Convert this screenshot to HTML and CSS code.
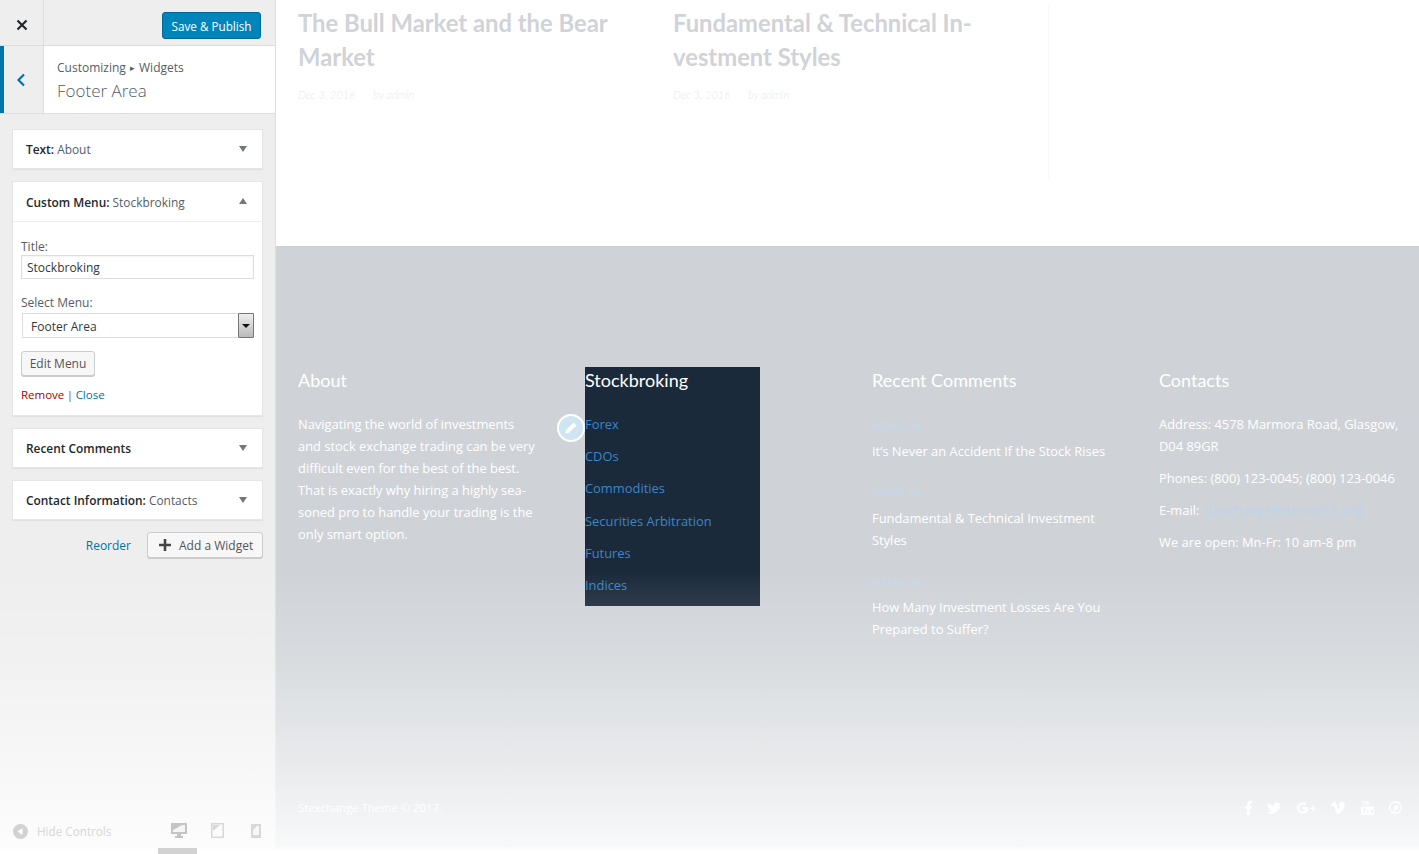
FILE: index.html
```html
<!DOCTYPE html>
<html lang="en">
<head>
<meta charset="utf-8">
<title>Customizer</title>
<link rel="stylesheet" href="styles.css">
</head>
<body>
<div class="app">
  <aside class="sidebar">
    <header class="topbar">
      <button class="close-btn" aria-label="Close">
        <svg width="12" height="12" viewBox="0 0 12 12"><path d="M1.500 1.500l9 9M10.500 1.500l-9 9" stroke="#23282d" stroke-width="2.200" fill="none"/></svg>
      </button>
      <button class="publish">Save &amp; Publish</button>
    </header>
    <div class="section-head">
      <div class="back">
        <svg width="10" height="14" viewBox="0 0 10 14"><path d="M8 1.500L2.500 7 8 12.500" stroke="#0073aa" stroke-width="2.200" fill="none"/></svg>
      </div>
      <div class="section-title">
        <div class="crumb">Customizing <span class="crumb-arrow">▸</span> Widgets</div>
        <div class="section-name">Footer Area</div>
      </div>
    </div>
    <div class="widgets">
      <div class="widget">
        <div class="widget-top"><span><b>Text:</b> About</span><i class="tri"></i></div>
      </div>
      <div class="widget">
        <div class="widget-top open"><span><b>Custom Menu:</b> Stockbroking</span><i class="tri up"></i></div>
        <div class="widget-body">
          <label class="lbl">Title:</label>
          <div class="input">Stockbroking</div>
          <label class="lbl lbl-select">Select Menu:</label>
          <div class="select">
            <span class="select-value">Footer Area</span>
            <span class="select-arrow"><i></i></span>
          </div>
          <button class="edit-menu">Edit Menu</button>
          <div class="actions"><a class="remove">Remove</a> | <a class="link">Close</a></div>
        </div>
      </div>
      <div class="widget">
        <div class="widget-top"><span><b>Recent Comments</b></span><i class="tri"></i></div>
      </div>
      <div class="widget">
        <div class="widget-top"><span><b>Contact Information:</b> Contacts</span><i class="tri"></i></div>
      </div>
      <div class="widget-actions">
        <a class="link">Reorder</a>
        <button class="add-widget">
          <svg width="12" height="12" viewBox="0 0 12 12"><path d="M6 0v12M0 6h12" stroke="#444" stroke-width="2.600"/></svg>
          Add a Widget
        </button>
      </div>
    </div>
    <footer class="controls">
      <div class="hide-controls">
        <svg width="15" height="15" viewBox="0 0 15 15"><circle cx="7.500" cy="7.500" r="7.500" fill="#d2d2d2"/><path d="M9.500 4v7L4.500 7.500z" fill="#fff"/></svg>
        <span>Hide Controls</span>
      </div>
      <div class="devices">
        <svg width="16" height="15" viewBox="0 0 16 15"><path d="M0 0h16v11H10v2h2v2H4v-2h2v-2H0z" fill="#c4c4c4"/><path d="M2 2h12v7H2z" fill="#f5f5f5"/><path d="M2 2h9L2 7z" fill="#c4c4c4"/></svg>
        <svg width="13" height="15" viewBox="0 0 13 15"><path d="M.75.75h11.500v13.500H.75z" fill="none" stroke="#d8d8d8" stroke-width="1.500"/><path d="M2 2h7L2 8z" fill="#d8d8d8"/></svg>
        <svg width="10" height="14" viewBox="0 0 10 14"><path d="M0 0h10v14H0z" fill="#d8d8d8"/><path d="M2 2h6v9H2z" fill="#f7f7f7"/><path d="M2 2h4L2 6z" fill="#d8d8d8"/></svg>
      </div>
      <div class="tab"></div>
    </footer>
  </aside>

  <main class="preview">
    <section class="posts">
      <article class="post">
        <h2>The Bull Market and the Bear Market</h2>
        <p class="meta"><span>Dec 3, 2016</span><span>by admin</span></p>
      </article>
      <article class="post">
        <h2>Fundamental &amp; Technical In-vestment Styles</h2>
        <p class="meta"><span>Dec 3, 2016</span><span>by admin</span></p>
      </article>
      <div class="post-rule"></div>
    </section>
    <section class="site-footer">
      <div class="cols">
        <div class="col">
          <h3>About</h3>
          <p>Navigating the world of investments and stock exchange trading can be very difficult even for the best of the best. That is exactly why hiring a highly sea-soned pro to handle your trading is the only smart option.</p>
        </div>
        <div class="col col-menu">
          <span class="edit-pin">
            <svg width="14" height="14" viewBox="0 0 14 14"><path d="M9.600 1.600l2.800 2.800-7.400 7.400-3.600.8.8-3.600z" fill="#fff"/></svg>
          </span>
          <div class="menu-panel">
            <h3>Stockbroking</h3>
            <ul>
              <li>Forex</li>
              <li>CDOs</li>
              <li>Commodities</li>
              <li>Securities Arbitration</li>
              <li>Futures</li>
              <li>Indices</li>
            </ul>
          </div>
        </div>
        <div class="col">
          <h3>Recent Comments</h3>
          <div class="comment"><div class="by">admin&nbsp; on</div><div class="ctitle">It’s Never an Accident If the Stock Rises</div></div>
          <div class="comment"><div class="by">admin&nbsp; on</div><div class="ctitle">Fundamental &amp; Technical Investment Styles</div></div>
          <div class="comment"><div class="by">admin&nbsp; on</div><div class="ctitle">How Many Investment Losses Are You Prepared to Suffer?</div></div>
        </div>
        <div class="col col-contact">
          <h3>Contacts</h3>
          <p>Address: 4578 Marmora Road, Glasgow, D04 89GR</p>
          <p>Phones: (800) 123-0045; (800) 123-0046</p>
          <p>E-mail: <a>stexchange@demolink.org</a></p>
          <p>We are open: Mn-Fr: 10 am-8 pm</p>
        </div>
      </div>
      <div class="bottom">
        <span>Stexchange Theme © 2017.</span>
        <div class="social">
          <svg width="7" height="14" viewBox="0 0 7 14"><path d="M2 14V7.600H0V5.200h2V3.400C2 1.200 3.200 0 5.200 0H7v2.400H5.800c-.9 0-1.100.4-1.100 1.100v1.700H7l-.3 2.400h-2V14z"/></svg>
          <svg width="14" height="12" viewBox="0 0 14 12"><path d="M14 1.600c-.5.2-1 .4-1.600.4.6-.4 1-.9 1.200-1.500-.5.3-1.100.5-1.800.7A2.900 2.900 0 0 0 6.900 3.800C4.500 3.700 2.400 2.500 1 .7c-.8 1.300-.4 3 .9 3.800-.5 0-.9-.1-1.300-.4 0 1.400 1 2.600 2.300 2.900-.4.1-.9.1-1.300 0 .4 1.200 1.500 2 2.700 2A5.800 5.800 0 0 1 0 10.200 8.200 8.200 0 0 0 12.600 3c.6-.4 1-.9 1.400-1.400z"/></svg>
          <svg width="19" height="12" viewBox="0 0 19 12"><path d="M5.600 5v2.200h3c-.2 1.200-1.300 2.300-3 2.300a3.500 3.500 0 0 1 0-7c1 0 1.700.4 2.200.9l1.700-1.700A5.700 5.700 0 1 0 5.600 11.700c3.300 0 5.500-2.300 5.500-5.600 0-.4 0-.8-.1-1.100z"/><path d="M15 3.500h1.500v2h2V7h-2v2H15V7h-2V5.500h2z"/></svg>
          <svg width="14" height="12" viewBox="0 0 14 12"><path d="M0 3.500l.8 1c.7-.5 1.200-.8 1.500-.8 1.100 0 1.700 3.100 2.400 5.300C5.200 10.500 5.800 12 7 12c1.900 0 4.300-2.700 6.200-6.400C14.500 2.800 14 .2 11.200 0 9.100 0 7.700 1.300 7.100 3.700c1.600-.7 2.300.1 1.500 1.700C8 6.600 7.400 7.300 7 7.300c-.6 0-1-3-1.500-5C5 .6 4.400 0 3.400.1 2.300.2.900 2.100 0 3.500z"/></svg>
          <svg width="13" height="14" viewBox="0 0 13 14"><path d="M1 0l.7 2.200V4h.8V2.200L3.300 0h-.8L2.100 1.400 1.700 0zM4 1v2.200c0 .6.300.9.800.9s.8-.3.800-.9V1c0-.6-.3-.9-.8-.9S4 .4 4 1zM6.400 0v3.400c0 .5.200.7.500.7s.6-.2.800-.4V4h.7V0h-.7v3c-.2.200-.5.300-.6 0V0z"/><path fill-rule="evenodd" d="M1.500 5.500h10c.8 0 1.500.7 1.500 1.500v5.500c0 .8-.7 1.500-1.500 1.500h-10C.7 14 0 13.300 0 12.500V7c0-.8.7-1.500 1.500-1.500zM2 7.500v1h1v4h1v-4h1v-1zM6 9v3h1.500V9zM10 9v3h2V9z"/></svg>
          <svg width="13" height="13" viewBox="0 0 13 13"><path fill-rule="evenodd" d="M6.500 0a6.500 6.500 0 1 1 0 13 6.500 6.500 0 0 1 0-13zm0 1.500a5 5 0 0 0-2 9.600l.8-3.300c-.8-1.800.3-4 2-4 1.900 0 2.500 1.500 2 3.300-.5 1.700-2 2.400-3 1.500l-.6 2.800A5 5 0 1 0 6.500 1.500z"/></svg>
        </div>
      </div>
    </section>
  </main>
  <div class="fade"></div>
</div>
</body>
</html>
```

FILE: styles.css
```css
* { box-sizing: border-box; }
html, body { margin: 0; height: 100%; overflow: hidden; }
body { font-family: "Open Sans", "Noto Sans", sans-serif; color: #555d66; background: #fff; }
button { font-family: inherit; }

.app { display: flex; width: 1419px; height: 854px; position: relative; overflow: hidden; }

/* Sidebar */
.sidebar { width: 276px; flex: none; display: flex; flex-direction: column; background: #eee; border-right: 1px solid #ddd; position: relative; }
.topbar { height: 46px; display: flex; align-items: center; justify-content: space-between; padding-right: 14px; border-bottom: 1px solid #ddd; }
.close-btn { width: 44px; height: 45px; border: 0; border-right: 1px solid #ddd; background: #eee; display: flex; align-items: center; justify-content: center; padding: 5px 0 0 0; }
.publish { width: 99px; height: 27px; background: #0085ba; color: #fff; border: 1px solid #006799; border-radius: 3px; font-size: 11.700px; padding: 0; margin-top: 6px; }

.section-head { height: 68px; display: flex; background: #fff; border-bottom: 1px solid #ddd; }
.back { width: 44px; flex: none; background: #eee; border-left: 4px solid #0073aa; border-right: 1px solid #ddd; display: flex; align-items: center; justify-content: center; padding: 0 6px 0 0; }
.section-title { padding: 13px 0 0 13px; }
.crumb { font-size: 12px; line-height: 18px; color: #555d66; }
.crumb-arrow { font-size: 9px; margin: 0 1px; position: relative; top: -1px; }
.section-name { font-size: 17px; font-weight: 300; line-height: 26px; color: #555d66; }

.widgets { padding: 15px 12px 0 12px; display: flex; flex-direction: column; }
.widget { width: 251px; background: #fff; border: 1px solid #e5e5e5; box-shadow: 0 1px 1px rgba(0,0,0,.05); margin-bottom: 12px; }
.widget-top { height: 38px; display: flex; align-items: center; justify-content: space-between; padding: 0 15px 0 13px; font-size: 11.900px; color: #555d66; }
.widget-top b { font-weight: 600; color: #23282d; }
.widget-top.open { height: 40px; border-bottom: 1px solid #eee; }
.tri { width: 0; height: 0; border-left: 4.500px solid transparent; border-right: 4.500px solid transparent; border-top: 6px solid #72777c; margin-top: -1px; }
.tri.up { border-top: 0; border-bottom: 6px solid #72777c; }
.widget-body { padding: 16px 8px 11px; font-size: 12px; }
.lbl { display: block; line-height: 17px; }
.input { height: 24px; border: 1px solid #ddd; background: #fff; padding: 0 5px; line-height: 23px; font-size: 12px; color: #32373c; box-shadow: inset 0 1px 2px rgba(0,0,0,.05); width: 233px; }
.lbl-select { margin-top: 15px; }
.select { height: 25px; margin: 2px 0 0 1px; width: 232px; border: 1px solid #ddd; display: flex; justify-content: space-between; align-items: center; padding-left: 8px; font-size: 12px; color: #32373c; }
.select-value { padding-top: 2px; }
.select-arrow { width: 16px; height: 25px; margin-right: -1px; border: 1px solid #777; background: linear-gradient(#eee, #bbb); display: flex; align-items: center; justify-content: center; border-radius: 1px; }
.select-arrow i { width: 0; height: 0; border-left: 4px solid transparent; border-right: 4px solid transparent; border-top: 4px solid #111; }
.edit-menu { display: block; width: 74px; height: 25px; margin-top: 13px; background: #f7f7f7; border: 1px solid #ccc; border-radius: 3px; box-shadow: 0 1px 0 #ccc; color: #555; font-size: 12px; padding: 0; }
.actions { margin-top: 10px; line-height: 18px; font-size: 11.500px; word-spacing: -.5px; }
.remove { color: #a00; }
.link { color: #0073aa; }
.widget-actions { display: flex; justify-content: flex-end; align-items: center; gap: 16px; font-size: 12px; width: 251px; }
.add-widget { width: 116px; height: 26px; display: flex; align-items: center; gap: 8px; padding: 0 0 0 11px; background: #f7f7f7; border: 1px solid #ccc; border-radius: 3px; box-shadow: 0 1px 0 #ccc; color: #555; font-size: 12px; }

.controls { position: absolute; left: 0; right: 0; bottom: 0; height: 46px; z-index: 3; }
.hide-controls { position: absolute; left: 13px; top: 15px; display: flex; align-items: center; gap: 9px; font-size: 11.700px; color: #d8d8d8; }
.devices { position: absolute; left: 171px; top: 15px; display: flex; align-items: center; gap: 24px; }
.devices svg:nth-child(3) { margin-left: 3px; }
.tab { position: absolute; left: 158px; bottom: 0; width: 39px; height: 6px; background: #d2d2d2; }

/* Preview */
.preview { flex: 1; min-width: 0; display: flex; flex-direction: column; background: #fff; }
.posts { height: 247px; display: flex; border-bottom: 1px solid #ccd0d4; flex: none; }
.post { width: 375px; padding: 6px 0 0 22px; flex: none; }
.post-rule { width: 1px; height: 176px; margin: 4px 0 0 22px; background: #f8f8f8; }
.post h2 { margin: 0; font: 700 23.800px/34px "Lato", "Open Sans", sans-serif; color: #d0d3d7; width: 320px; }
.meta { margin: 12px 0 0; font: italic 300 11px/18px "Lato", sans-serif; color: #e6eaee; display: flex; gap: 18px; }

.site-footer { flex: 1; background: #cfd3d7; padding: 120px 0 0 22px; display: flex; flex-direction: column; position: relative; color: #fff; }
.cols { display: grid; grid-template-columns: repeat(4, 239px); column-gap: 48px; font-size: 12.900px; line-height: 22px; }
.col h3 { margin: 0 0 2px; font: 400 18px/26px "Lato", "Open Sans", sans-serif; color: #fff; }
.col p { margin: 0 0 10px; }
.col > h3 + p { margin-top: 20px; }
.col-contact p { margin-right: -6px; }
.col-menu { position: relative; }
.menu-panel { width: 175px; height: 239px; background: #1b2a3b; }
.menu-panel ul { list-style: none; margin: 20px 0 0; padding: 0; color: #3a86c8; }
.menu-panel li { height: 32.200px; line-height: 22px; }
.edit-pin { position: absolute; left: -28px; top: 47px; width: 28px; height: 28px; border-radius: 50%; background: #cfe6f2; border: 2px solid #fff; display: flex; align-items: center; justify-content: center; z-index: 2; }
.comment { margin-bottom: 21px; }
.comment:first-of-type { margin-top: 23px; }
.by { font-size: 11px; line-height: 18px; font-style: italic; color: #c2daee; }
.ctitle { margin-top: 6px; }
.col-contact a { color: #bed3e8; }

.bottom { position: absolute; left: 22px; right: 17px; top: 553px; display: flex; justify-content: space-between; align-items: center; font-size: 11.300px; color: #fff; }
.social { display: flex; align-items: center; gap: 15.500px; }
.social svg { fill: #fff; }

.fade { position: absolute; left: 0; right: 0; top: 570px; bottom: 0; pointer-events: none; background: linear-gradient(rgba(255,255,255,0) 0, rgba(255,255,255,.2) 32%, rgba(255,255,255,.52) 67%, rgba(255,255,255,.85) 97%, #fff 99%); z-index: 2; }
```
